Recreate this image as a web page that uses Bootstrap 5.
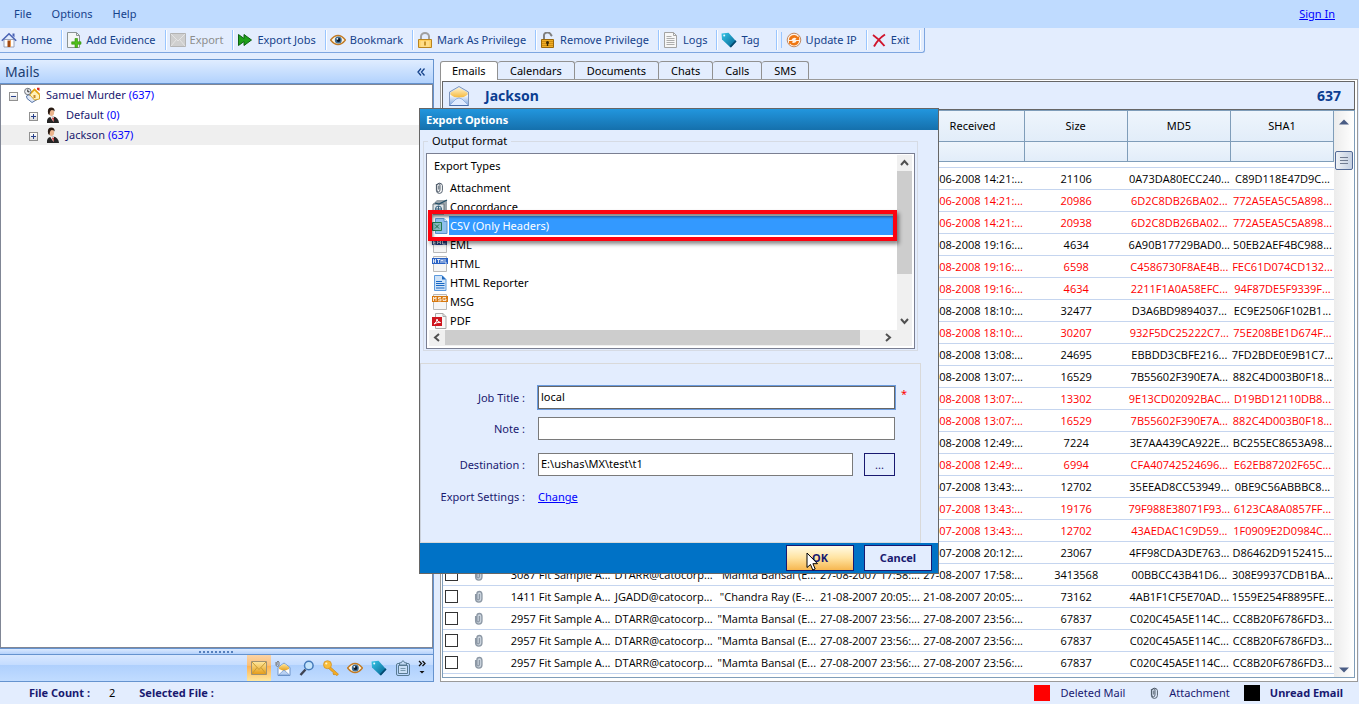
<!DOCTYPE html>
<html lang="en">
<head>
<meta charset="utf-8">
<meta name="viewport" content="width=device-width, initial-scale=1">
<title>Mails - Export Options</title>
<link href="https://cdn.jsdelivr.net/npm/bootstrap@5.3.0/dist/css/bootstrap.min.css" rel="stylesheet">
<style>
:root{--panel:#e3edfe;--navy:#15428b;--ink:#191970;--edge:#6593cf;--grid:#7f9db9}
body{font:11px/16px "Noto Sans","Open Sans",sans-serif;background:var(--panel);color:#000;min-width:1100px}
button{font:inherit;color:inherit;background:none;border:0;padding:0;text-align:left}
svg{display:block;flex:none}
.ico{width:16px;height:16px}
a,a:hover{color:#00f;text-decoration:underline}
.min0{min-height:0;min-width:0}

.menubar{height:28px;background:#bfdbff;color:var(--navy);padding:0 24px 0 14px}
.menubar button{margin-right:20px}
.tools{height:25px;color:var(--navy);border-bottom:1px solid #7ea6e0;border-right:1px solid #7ea6e0;border-radius:0 0 3px 0;padding-left:1px}
.tools button{display:flex;align-items:center;gap:4px;height:20px;padding:0 9px 0 4px;border-right:1px solid #9ac6ff;box-shadow:1px 0 #fff;white-space:nowrap}
.tools button:disabled{color:#8d8d8d}
.tools i{width:5px;height:16px;border-right:1px solid #9ac6ff}

.main{padding-top:6px;gap:6px}
.side{width:434px;border:1px solid var(--edge);border-left:0}
.sidehead{height:24px;background:linear-gradient(#e0edff,#b2d2fd);font-size:14px;color:#1d3f72;padding:0 8px 0 5px;border-bottom:1px solid var(--edge)}
.tree{background:#fff;border:1px solid #808695;color:var(--ink)}
.tree li{display:flex;align-items:center;height:20px;gap:6px}
.tree .lv0{padding-left:8px}
.tree .lv1{padding-left:28px}
.tree b{font-weight:400;color:#00f}
.tree .on{background:#efefef}
.twist{width:9px;height:9px;border:1px solid #919191;background:linear-gradient(#fff,#ddd);position:relative;margin-top:3px}
.twist::before,.twist.plus::after{content:"";position:absolute;left:1px;top:3px;width:5px;height:1px;background:#27408b}
.twist.plus::after{left:3px;top:1px;width:1px;height:5px}
.grip{height:7px;background:linear-gradient(#dbe9ff,#b5d2fb);border-top:1px solid var(--edge);border-bottom:1px solid var(--edge)}
.grip span{width:35px;height:2px;background:repeating-linear-gradient(90deg,#5580bd 0 2px,transparent 2px 4px)}
.navicons{height:26px;background:linear-gradient(#d9e8ff 0,#c4dcff 38%,#afd0fd 40%,#c1dcff);padding-right:2px}
.navicons button{width:24px;height:26px;display:flex;align-items:center;justify-content:center}
.navicons .on{background:linear-gradient(#fbd3a5 0,#fcc077 40%,#ffb14f 42%,#fee8a0)}
.navicons .more{width:16px}

.work{padding-right:1px}
.tabsrow{height:20px;padding-top:2px;position:relative;z-index:1}
.tabsrow button{height:18px;border:1px solid #919191;border-left-width:0;border-bottom:0;border-radius:3px 3px 0 0;padding:0 12px}
.tabsrow .on{background:#fff;height:19px;border-left-width:1px;width:58px;padding:0 11px}
.pane{border:1px solid #9a9a9a;background:#fff;padding:1px 2px 3px 1px}
.panehead{height:29px;border:1px solid #666;padding:0 13px 0 6px;color:#0b3d91;font-weight:700;font-size:14px;background:var(--panel)}
.gridbox{border:1px solid var(--grid);background:#fff}
.mails{table-layout:fixed;width:100%;border-collapse:separate;border-spacing:0;font:11px/21px "Open Sans","Noto Sans",sans-serif;text-align:center;white-space:nowrap}
.mails th{height:31px;font:inherit;font-family:"Noto Sans",sans-serif;border-right:1px solid var(--grid);border-bottom:1px solid var(--grid);padding:0 0 2px;background:linear-gradient(#eef5fc,#e2edf9)}
.mails tr.filter th{height:20px;padding:0}
.mails td{height:22px;padding:0;border-bottom:1px solid #c5d5ef;overflow:hidden}
.mails tr.space td{height:6px}
.mails .del{color:#f00}
.mails input{appearance:none;width:13px;height:13px;border:1px solid #333;background:#fff;margin:0 0 0 2px;display:block}
.c1{width:18px}.c2{width:36px}.c3{width:12px}
.vbar{width:20px;background:linear-gradient(90deg,#ececec,#fff)}
.vbar .thumb{width:18px;height:19px;border:1px solid #536a96;border-radius:2px;background:linear-gradient(90deg,#eef1f5,#c3cfe2);margin-top:26px;padding:5px 4px}
.vbar .thumb span{display:block;height:7px;background:repeating-linear-gradient(#707b90 0 1px,transparent 1px 3px)}

.foot{height:22px;color:var(--ink);padding:0 16px 0 29px}
.foot .count{margin:0 24px 0 19px}
.foot .sw{width:16px;height:16px;margin-right:10px}
.foot .legend-clip{gap:6px;margin:0 14px 0 22px}

.dlg{position:absolute;top:108px;left:0;right:1px;width:520px;margin:0 auto;z-index:5;border:1px solid #666;background:var(--panel)}
.dlgtitle{height:21px;background:linear-gradient(#2296de,#1570ac);color:#fff;font-weight:700;padding:3px 6px}
.dlg fieldset{border:1px solid #d6dbe4;margin:11px 20px 12px 3px;padding:11px 2px 1px;position:relative}
.dlg legend{position:absolute;left:4px;top:-9px;width:auto;float:none;font-size:11px;line-height:16px;padding:0 4px;margin:0;background:var(--panel)}
.types{border:1px solid #7a7f92;background:#fff;padding:1px 2px 2px}
.types h6{font:inherit;height:23px;padding:3px 5px 0;margin:0}
.types .rowitem{display:flex;align-items:center;gap:1px;height:19px;width:100%;padding-left:3px;position:relative}
.types .rowitem span{flex:1;line-height:19px;padding-left:1px}
.types .on span{background:#39f;color:#fff}
.types .on::after{content:"";position:absolute;left:-1px;right:0;top:-6px;bottom:-6px;border:4px solid #fd0310;box-shadow:2px 3px 4px #0007,inset 1px 3px 3px #0007;z-index:2}
.sbv{width:15px;background:#f0f0f0}
.sbv span{display:block;height:103px;background:#cdcdcd}
.sbh{height:16px;background:#f0f0f0;padding-bottom:1px}
.sbh span{flex:1;height:15px;background:#cdcdcd}
.form{border:1px solid #d9d9d9;border-left-color:#ccd2dc;margin-right:17px;padding:22px 12px 0 0;height:180px;color:var(--ink)}
.frow{display:grid;grid-template-columns:104px 1fr;column-gap:13px;align-items:center;margin-bottom:8px}
.frow.wide{margin-bottom:13px}
.frow label,.frow .lab{text-align:right}
.form input{width:357px;height:23px;border:1px solid #7a7a7a;border-radius:0;padding:0 2px 2px;font-size:11px;line-height:16px;color:#000;background:#fff}
.form input.focus{border-color:#666;box-shadow:0 0 0 1px #6a9bdf}
.form input.short{width:315px}
.req{color:#f00;margin-left:6px}
.dots{width:31px;height:23px;border:1px solid var(--ink);text-align:center;margin-left:11px}
.act{height:30px;background:#0072c6;padding:2px 6px 0;gap:10px}
.act button{width:68px;height:26px;border:1px solid var(--ink);color:var(--ink);background:var(--panel);font-weight:700;text-align:center}
.act .ok{background:linear-gradient(#fffbe6,#ffe3a0 50%,#f6b750);position:relative}
.act svg{position:absolute;left:19px;top:6px}
</style>
</head>
<body class="vh-100 d-flex flex-column overflow-hidden position-relative">

<svg width="0" height="0" class="position-absolute" aria-hidden="true">
 <defs>
  <linearGradient id="gGold" x2="0" y2="1"><stop stop-color="#ffe9a0"/><stop offset="1" stop-color="#e59a14"/></linearGradient>
  <linearGradient id="gTeal" x2="1" y2="1"><stop stop-color="#35c6e8"/><stop offset="1" stop-color="#04608f"/></linearGradient>
  <linearGradient id="gBlue" x2="0" y2="1"><stop stop-color="#fff"/><stop offset="1" stop-color="#7fa6e0"/></linearGradient>
  <linearGradient id="gOpen" x2="0" y2="1"><stop stop-color="#fff3cf"/><stop offset="1" stop-color="#f5b93c"/></linearGradient>
 </defs>
 <symbol id="home" viewBox="0 0 16 16"><path d="M3 7.500h10v7.500H3z" fill="#fff" stroke="#9aa2b8"/><path d="M.8 8.800 8 1.800l7.200 7" fill="none" stroke="#4a63b5" stroke-width="1.600"/><path d="M11.500 1.500h2v4l-2-2z" fill="#4a63b5"/><path d="M6.500 8.500h3.500V15H6.500z" fill="#a34a12"/><path d="M9 8.500h1V15H9z" fill="#e69a54"/></symbol>
 <symbol id="adddoc" viewBox="0 0 16 16"><path d="M1.500.5h9l3 3v12h-12z" fill="#f4f6f6" stroke="#8c9494"/><path d="M10.500.5v3h3" fill="none" stroke="#8c9494"/><path d="M9 6.500h2.500v3.300H15v2.400h-3.500v3.300H9v-3.300H5.700V9.800H9z" fill="#4fc01b" stroke="#2f8a0a" stroke-width=".6"/></symbol>
 <symbol id="envgray" viewBox="0 0 16 16"><path d="M.5 1.500h15v13H.5z" fill="#cfcfcf" stroke="#b4b4b4"/><path d="m1 2 7 7 7-7M1 14l5-6M15 14l-5-6" fill="none" stroke="#e4e4e4"/></symbol>
 <symbol id="jobs" viewBox="0 0 16 16"><path d="M1.500 2.500 7 6.500v-4L14.500 8 7 13.500v-4l-5.500 4z" fill="#1ea01a" stroke="#0c6212"/></symbol>
 <symbol id="eye" viewBox="0 0 16 16"><path d="M.6 8Q4 3.500 8 3.500T15.400 8Q12 12.500 8 12.500T.6 8z" fill="#fff6e4" stroke="#c07a24" stroke-width="1.300"/><circle cx="8.300" cy="8" r="3.500" fill="#3f6e96"/><circle cx="8.500" cy="8" r="1.900" fill="#0b1a2a"/><circle cx="7.400" cy="6.800" r=".9" fill="#fff"/></symbol>
 <symbol id="lock" viewBox="0 0 16 16"><path d="M4 8V4.500a4 3.500 0 0 1 8 0V8" fill="none" stroke="#a0a0a0" stroke-width="2"/><path d="M1.500 7.500h13v8h-13z" fill="#ffd060" stroke="#b88420"/><path d="M3.500 10h9M3.500 12h9M3.500 14h9" stroke="#fff3c4" stroke-width=".8"/><path d="M7 9.500h2v4H7z" fill="#c8962b"/></symbol>
 <symbol id="unlock" viewBox="0 0 16 16"><path d="M4 8V4a3.500 3 0 0 1 7-1l1 1" fill="none" stroke="#808080" stroke-width="2"/><path d="M1.500 7.500h12v8h-12z" fill="#efae28" stroke="#9b680b"/><path d="M2 9.500h11M2 11.500h11M2 13.500h11" stroke="#c9860f" stroke-width=".8"/><circle cx="7.500" cy="10.500" r="1.500" fill="#3c2a04"/><path d="M6.800 11h1.400v3H6.800z" fill="#3c2a04"/></symbol>
 <symbol id="log" viewBox="0 0 16 16"><path d="M1.500.5h9l3 3v12h-12z" fill="#f7f7f7" stroke="#a3a3a3"/><path d="M10.500.5v3h3" fill="none" stroke="#a3a3a3"/><path d="M3.500 4.500h5M3.500 6.500h8M3.500 8.500h8M3.500 10.500h8M3.500 12.500h8" stroke="#adadad"/></symbol>
 <symbol id="tag" viewBox="0 0 16 16"><path d="M.5 1.500 7.500.8 15.300 9.600 9.500 15.500 1 7.500z" fill="url(#gTeal)"/><path d="m10 15.500 5.500-6-1-1.200-5.800 6z" fill="#044a70"/><circle cx="3.200" cy="3.400" r="1" fill="#e8fbff"/></symbol>
 <symbol id="upd" viewBox="0 0 16 16"><circle cx="8" cy="8" r="6.800" fill="#fff1e4" stroke="#c08a64"/><path d="M3 8a5 5 0 0 1 9-3l1.200-1v4H9l1.500-1.300A3 3 0 0 0 5.500 8z" fill="#ef7612"/><path d="M13 9a5 5 0 0 1-9 2.500L3 12.500V9h4l-1.200 1.200A3 3 0 0 0 10.500 9z" fill="#ef7612"/></symbol>
 <symbol id="exit" viewBox="0 0 16 16"><path d="M2 3q6 4 11.500 11M14 2.500Q7 7 3 14.500" fill="none" stroke="#d0142c" stroke-width="1.900"/></symbol>
 <symbol id="case" viewBox="0 0 16 16"><path d="m2.500 9 .5 2.500 5 4 6-3.500V8H4z" fill="#dfe8f7" stroke="#5674a5"/><path d="m5.500 7.500 5-5 5 5V12l-5 1z" fill="#fff1b8" stroke="#d6a526"/><path d="m5 7.800 5.500-5.300 5 5" fill="none" stroke="#e5a40c" stroke-width="1.700"/><path d="M13 .8h2.500V4L13 2.500z" fill="#d9241b"/><path d="M9.500 8h2v3h-2z" fill="#c98a2a"/><circle cx="3.800" cy="4.500" r="3.200" fill="#eceef2" stroke="#6d727a"/><path d="M3.800 2.500v2.300h1.700" fill="none" stroke="#222"/></symbol>
 <symbol id="person" viewBox="0 0 16 16"><path d="M3 16q-.5-5 3-6l3.500-.5q5 1 5.500 6.500z" fill="#262626"/><path d="M6 9.500 9.500 15l.5-5.500z" fill="#f1f1f1"/><path d="m8 10.500 1.300 4.500.7-4z" fill="#d12626"/><ellipse cx="7.500" cy="5.500" rx="2.600" ry="3.400" fill="#eab48d"/><path d="M4.200 7Q2.800.8 7 .6q4 .2 3.600 3.900-1-1.400-3-1.400-1.300.3-1.600 2Q5.500 7 5.500 8z" fill="#2b1c14"/></symbol>
 <symbol id="clip" viewBox="-1 -2 20 20"><path d="M5 4.500v5.800a2 2.500 0 0 0 4 0V4.200a1.500 1.700 0 0 0-3 0M5 4.500Q5.500 2 8.500 2T12 5v6A3.700 3.700 0 0 1 4.500 11V3M7.500 5v5" fill="none" stroke="#4b5866" stroke-width="1.200"/></symbol>
 <symbol id="clip2" viewBox="-1 -1 19 19"><path d="M4.500 5v6a3.700 3.500 0 0 0 7.500 0V5.500Q12 2 9 2T6 5v5.500q1.500 3 3 0V5" fill="#cdd6df" stroke="#8d98a5" stroke-width="1.600"/></symbol>
 <symbol id="openmail" viewBox="0 0 20 20"><path d="M.5 6 10 .5 19.500 6V19.500H.5z" fill="#cfe0f8" stroke="#7f96bd"/><path d="M1.500 6.500 10 1.500l8.500 5v5h-17z" fill="url(#gOpen)"/><path d="M1 8.500q9 7 18 0V19H1z" fill="url(#gBlue)"/><path d="m1 19 6-6q3-2 6 0l6 6" fill="#dfeaff" stroke="#93b3e2"/><path d="M.5 19.500h19" stroke="#4b6fae"/></symbol>
 <symbol id="envgold" viewBox="0 0 16 16"><path d="M.5 1.500h15v13H.5z" fill="url(#gGold)" stroke="#9e9174"/><path d="m1 2 7 7.500L15 2M1 14l5-6.500M15 14l-5-6.500" fill="none" stroke="#c99b34"/></symbol>
 <symbol id="mailclip" viewBox="0 0 16 16"><path d="M3 7.500 9 3l6 4.500v8H3z" fill="#fff" stroke="#6c92c8"/><path d="m4 7 5-3.500 5 3.500v2L9 11 4 9z" fill="url(#gGold)"/><path d="m3.500 15 5.500-5 5.500 5z" fill="#b9d1f3" stroke="#6c92c8" stroke-width=".7"/><path d="M1 2v3.500q1.500 2 3 0V2q-1-1.500-2 0v3" fill="none" stroke="#777"/></symbol>
 <symbol id="find" viewBox="0 0 16 16"><path d="m1.500 15 5-5.500" stroke="#3d4252" stroke-width="2.400"/><circle cx="9.800" cy="5.500" r="4.300" fill="#c5e4fb" stroke="#4479b8" stroke-width="1.500"/></symbol>
 <symbol id="key" viewBox="0 0 16 16"><path d="m7 6.500 8.500 7.700-1.700 1.500-1.800-1.500-1 .8-1-1 .4-1.300L5 8z" fill="#f4ac22" stroke="#c47f14" stroke-width=".6"/><circle cx="4.500" cy="4.700" r="4" fill="#f9bd3b" stroke="#cf8a1c" stroke-width=".7"/><circle cx="3.300" cy="3.500" r="1.100" fill="#fff4cf"/></symbol>
 <symbol id="board" viewBox="0 0 16 16"><rect x="1.500" y="3.500" width="13" height="12" rx="1.500" fill="none" stroke="#587b92"/><path d="M3.500 5.500h9v8h-9z" fill="#c9dff6" stroke="#587b92"/><path d="M4.500 5V2.800H6.200q1.800-4 3.600 0h1.700V5z" fill="#c4dbf5" stroke="#587b92"/><path d="M5.500 8.500h5M5.500 10.500h5" stroke="#7899ae"/></symbol>
 <symbol id="chev" viewBox="0 0 10 16"><path d="m1 1 2.500 2.500L1 6M4.500 1 7 3.500 4.500 6" fill="none" stroke="#111" stroke-width="1.300"/><path d="M1.500 11h5L4 13.500z" fill="#111"/></symbol>
 <symbol id="conc" viewBox="0 0 16 16"><path d="m1 5 4-4h10v10l-3 4H1z" fill="#9aa4ab"/><path d="M1 5h11v10H1z" fill="#dfe5e8" stroke="#69757d"/><circle cx="6.500" cy="10" r="3" fill="none" stroke="#36617f"/><path d="M3.500 10h6M6.500 7v6" stroke="#36617f"/><path d="m3 4 4 1 8-4" fill="none" stroke="#1f4c66" stroke-width="1.200"/></symbol>
 <symbol id="csv" viewBox="0 0 16 16"><path d="M3.500.5H12l3 3v12H3.500z" fill="#8fc0ee" stroke="#5a92cb"/><path d="M12 .5v3h3" fill="#dcecfb" stroke="#5a92cb"/><path d="M.5 4.500h9v8h-9z" fill="#86b9c0" stroke="#20794f"/><path d="m3 6.500 4 4m0-4-4 4" stroke="#1d6d48"/></symbol>
 <symbol id="eml" viewBox="0 0 16 16"><path d="M1.500.5h13v15h-13z" fill="#f5f5f5" stroke="#b9b9b9"/><path d="M0 3h15v5H0z" fill="#27417d"/><path d="M1.500 4v3m0-3h2m-2 1.500h2m-2 1.500h2M5.500 7V4L7 6l1.500-2v3m2-3v3h3" fill="none" stroke="#fff" stroke-width=".8"/></symbol>
 <symbol id="html" viewBox="0 0 16 16"><path d="M1.500.5h13v15h-13z" fill="#f5f5f5" stroke="#b9b9b9"/><path d="M0 2h16v6H0z" fill="#2a62c4"/><path d="M1.500 3v4m0-2h2m0-2v4M5 3.500h3M6.500 3.500V7m2.500 0V3.500L10 5l1-1.500V7m2-4v4h2" fill="none" stroke="#fff" stroke-width=".8"/></symbol>
 <symbol id="rep" viewBox="0 0 16 16"><path d="M2.500.5H10l4 4v11H2.500z" fill="#cfe3f8" stroke="#5d9add"/><path d="M10 .5v4h4z" fill="#1f68bd"/><path d="M4 6.500h6M4 8.500h8.500M4 10.500h8.500M4 13h8.500" stroke="#1767c4" stroke-width="1.200"/></symbol>
 <symbol id="msg" viewBox="0 0 16 16"><path d="M1.500.5h13v15h-13z" fill="#f5f5f5" stroke="#b9b9b9"/><path d="M0 2h16v6H0z" fill="#d8790f"/><path d="M1.500 7V3L3 5l1-2v4M9 3.500H6.500V5H9v1.800H6M14 3.500h-3v3h3V5h-1.500" fill="none" stroke="#fff" stroke-width=".8"/></symbol>
 <symbol id="pdf" viewBox="0 0 16 16"><path d="M3.500.5H11l3 3v12H3.500z" fill="#f8f8f8" stroke="#a9a9a9"/><path d="M11 .5v3h3" fill="none" stroke="#a9a9a9"/><path d="M0 4h10v9H0z" fill="#cf1720"/><path d="M2 11q3-2 3-5 0 3 3.500 3.500Q5 9 2 11z" fill="none" stroke="#fff"/></symbol>
</svg>

<nav class="menubar d-flex align-items-center flex-shrink-0" aria-label="Menu">
 <button>File</button><button>Options</button><button>Help</button>
 <a class="ms-auto" href="#">Sign In</a>
</nav>

<div class="d-flex flex-shrink-0"><div class="tools d-flex align-items-center" role="toolbar">
 <button class="ps-0"><svg class="ico"><use href="#home"/></svg>Home</button>
 <button><svg class="ico"><use href="#adddoc"/></svg>Add Evidence</button>
 <button disabled><svg class="ico"><use href="#envgray"/></svg>Export</button>
 <button><svg class="ico"><use href="#jobs"/></svg>Export Jobs</button>
 <button><svg class="ico"><use href="#eye"/></svg>Bookmark</button>
 <button><svg class="ico"><use href="#lock"/></svg>Mark As Privilege</button>
 <button><svg class="ico"><use href="#unlock"/></svg>Remove Privilege</button>
 <button><svg class="ico"><use href="#log"/></svg>Logs</button>
 <button class="pe-3"><svg class="ico"><use href="#tag"/></svg>Tag</button>
 <i></i>
 <button><svg class="ico"><use href="#upd"/></svg>Update IP</button>
 <button class="me-1"><svg class="ico"><use href="#exit"/></svg>Exit</button>
</div></div>

<main class="main d-flex flex-fill min0">
 <section class="side d-flex flex-column flex-shrink-0">
  <div class="sidehead d-flex align-items-center justify-content-between">Mails<svg width="8" height="8" viewBox="0 0 8 8"><path d="M4 .5 1 4l3 3.500M7.500.5l-3 3.500 3 3.500" fill="none" stroke="#15428b" stroke-width="1.300"/></svg></div>
  <ul class="tree list-unstyled flex-fill mb-0">
   <li class="lv0"><button class="twist" aria-label="Collapse"></button><svg class="ico"><use href="#case"/></svg><span>Samuel Murder <b>(637)</b></span></li>
   <li class="lv1"><button class="twist plus" aria-label="Expand"></button><svg class="ico"><use href="#person"/></svg><span>Default <b>(0)</b></span></li>
   <li class="lv1 on"><button class="twist plus" aria-label="Expand"></button><svg class="ico"><use href="#person"/></svg><span>Jackson <b>(637)</b></span></li>
  </ul>
  <div class="grip d-flex align-items-center justify-content-center"><span></span></div>
  <div class="navicons d-flex justify-content-end">
   <button class="on" aria-label="Mail"><svg class="ico"><use href="#envgold"/></svg></button>
   <button aria-label="Attachments"><svg class="ico"><use href="#mailclip"/></svg></button>
   <button aria-label="Search"><svg class="ico"><use href="#find"/></svg></button>
   <button aria-label="Keywords"><svg class="ico"><use href="#key"/></svg></button>
   <button aria-label="Bookmarks"><svg class="ico"><use href="#eye"/></svg></button>
   <button aria-label="Tags"><svg class="ico"><use href="#tag"/></svg></button>
   <button aria-label="Clipboard"><svg class="ico"><use href="#board"/></svg></button>
   <button class="more" aria-label="More"><svg width="10" height="16"><use href="#chev"/></svg></button>
  </div>
 </section>

 <section class="work d-flex flex-column flex-fill min0">
  <div class="tabsrow d-flex align-items-start flex-shrink-0">
   <button class="on">Emails</button><button>Calendars</button><button>Documents</button><button>Chats</button><button>Calls</button><button>SMS</button>
  </div>
  <div class="pane flex-fill d-flex flex-column min0">
   <div class="panehead d-flex align-items-center flex-shrink-0"><svg width="20" height="20" class="me-3"><use href="#openmail"/></svg>Jackson<span class="ms-auto">637</span></div>
   <div class="gridbox d-flex flex-fill min0">
    <div class="flex-fill overflow-hidden min0">
     <table class="mails">
      <colgroup><col class="c1"><col class="c2"><col class="c3"><col><col><col><col><col><col><col><col></colgroup>
      <thead>
       <tr><th></th><th></th><th></th><th></th><th></th><th></th><th></th><th>Received</th><th>Size</th><th>MD5</th><th>SHA1</th></tr>
       <tr class="filter"><th></th><th></th><th></th><th></th><th></th><th></th><th></th><th></th><th></th><th></th><th></th></tr>
      </thead>
      <tbody id="rows"><tr class="space"><td colspan="11"></td></tr></tbody>
     </table>
    </div>
    <div class="vbar d-flex flex-column align-items-center flex-shrink-0">
     <svg width="10" height="6" class="mt-2"><path d="M0 5.500h10L5 .5z" fill="#4a5d85"/></svg>
     <div class="thumb"><span></span></div>
     <svg width="10" height="6" class="mt-auto mb-1"><path d="M0 .5h10l-5 5z" fill="#4a5d85"/></svg>
    </div>
   </div>
  </div>
 </section>
</main>

<footer class="foot d-flex align-items-center flex-shrink-0">
 <b>File Count :</b><span class="count text-black">2</span><b>Selected File :</b>
 <span class="sw ms-auto" style="background:#f00"></span>Deleted Mail
 <span class="legend-clip d-flex align-items-center"><svg class="ico"><use href="#clip"/></svg>Attachment</span>
 <span class="sw bg-black"></span><b>Unread Email</b>
</footer>

<div class="dlg" role="dialog" aria-labelledby="dt">
 <div class="dlgtitle" id="dt">Export Options</div>
 <fieldset>
  <legend>Output format</legend>
  <div class="types">
   <div class="d-flex">
    <div class="flex-fill">
     <h6>Export Types</h6>
     <button class="rowitem"><svg class="ico"><use href="#clip"/></svg><span>Attachment</span></button>
     <button class="rowitem"><svg class="ico"><use href="#conc"/></svg><span>Concordance</span></button>
     <button class="rowitem on"><svg class="ico"><use href="#csv"/></svg><span>CSV (Only Headers)</span></button>
     <button class="rowitem"><svg class="ico"><use href="#eml"/></svg><span>EML</span></button>
     <button class="rowitem"><svg class="ico"><use href="#html"/></svg><span>HTML</span></button>
     <button class="rowitem"><svg class="ico"><use href="#rep"/></svg><span>HTML Reporter</span></button>
     <button class="rowitem"><svg class="ico"><use href="#msg"/></svg><span>MSG</span></button>
     <button class="rowitem"><svg class="ico"><use href="#pdf"/></svg><span>PDF</span></button>
    </div>
    <div class="sbv d-flex flex-column align-items-center">
     <svg width="9" height="16" viewBox="0 0 9 16"><path d="m1 10 3.500-4L8 10" fill="none" stroke="#505050" stroke-width="2"/></svg>
     <span class="w-100"></span>
     <svg class="mt-auto" width="9" height="17" viewBox="0 0 9 17"><path d="m1 6 3.500 4L8 6" fill="none" stroke="#505050" stroke-width="2"/></svg>
    </div>
   </div>
   <div class="sbh d-flex align-items-center">
    <svg width="16" height="9" viewBox="0 0 16 9"><path d="M10 1 6 4.500 10 8" fill="none" stroke="#505050" stroke-width="2"/></svg>
    <span></span>
    <svg class="ms-3 me-1" width="32" height="9" viewBox="0 0 32 9"><path d="m10 1 4 3.500L10 8" fill="none" stroke="#505050" stroke-width="2"/></svg>
   </div>
  </div>
 </fieldset>
 <form class="form" onsubmit="return false">
  <div class="frow"><label for="jt">Job Title :</label><div class="d-flex"><input id="jt" class="focus" value="local"><span class="req">*</span></div></div>
  <div class="frow wide"><label for="nt">Note :</label><input id="nt"></div>
  <div class="frow wide"><label for="ds">Destination :</label><div class="d-flex"><input id="ds" class="short" value="E:\ushas\MX\test\t1"><button class="dots" aria-label="Browse">...</button></div></div>
  <div class="frow"><span class="lab">Export Settings :</span><a href="#">Change</a></div>
 </form>
 <div class="act d-flex justify-content-end">
  <button class="ok">OK<svg width="13" height="19" viewBox="0 0 13 19"><path d="M1 1v14.500l3.500-3 2.300 5.500 2.400-1-2.300-5.300H11.500z" fill="#fff" stroke="#000"/></svg></button>
  <button>Cancel</button>
 </div>
</div>

<script>
// Mail list. First value 1 = deleted mail; then received, size, MD5, SHA1, subject, from, to, sent
const mails = [
 [0,'23-06-2008 14:21:...','21106','0A73DA80ECC240...','C89D118E47D9C...'],
 [1,'23-06-2008 14:21:...','20986','6D2C8DB26BA02...','772A5EA5C5A898...'],
 [1,'23-06-2008 14:21:...','20938','6D2C8DB26BA02...','772A5EA5C5A898...'],
 [0,'20-08-2008 19:16:...','4634','6A90B17729BAD0...','50EB2AEF4BC988...'],
 [1,'20-08-2008 19:16:...','6598','C4586730F8AE4B...','FEC61D074CD132...'],
 [1,'20-08-2008 19:16:...','4634','2211F1A0A58EFC...','94F87DE5F9339F...'],
 [0,'20-08-2008 18:10:...','32477','D3A6BD9894037...','EC9E2506F102B1...'],
 [1,'20-08-2008 18:10:...','30207','932F5DC25222C7...','75E208BE1D674F...'],
 [0,'20-08-2008 13:08:...','24695','EBBDD3CBFE216...','7FD2BDE0E9B1C7...'],
 [0,'20-08-2008 13:07:...','16529','7B55602F390E7A...','882C4D003B0F18...'],
 [1,'20-08-2008 13:07:...','13302','9E13CD02092BAC...','D19BD12110DB8...'],
 [1,'20-08-2008 13:07:...','16529','7B55602F390E7A...','882C4D003B0F18...'],
 [0,'20-08-2008 12:49:...','7224','3E7AA439CA922E...','BC255EC8653A98...'],
 [1,'20-08-2008 12:49:...','6994','CFA40742524696...','E62EB87202F65C...'],
 [0,'20-07-2008 13:43:...','12702','35EEAD8CC53949...','0BE9C56ABBBC8...'],
 [1,'20-07-2008 13:43:...','19176','79F988E38071F93...','6123CA8A0857FF...'],
 [1,'20-07-2008 13:43:...','12702','43AEDAC1C9D59...','1F0909E2D0984C...'],
 [0,'20-07-2008 20:12:...','23067','4FF98CDA3DE763...','D86462D9152415...'],
 [0,'27-08-2007 17:58:...','3413568','00BBCC43B41D6...','308E9937CDB1BA...','3087 Fit Sample A...','DTARR@catocorp...','"Mamta Bansal (E...','27-08-2007 17:58:...'],
 [0,'21-08-2007 20:05:...','73162','4AB1F1CF5E70AD...','1559E254F8895FE...','1411 Fit Sample A...','JGADD@catocorp...','"Chandra Ray (E-...','21-08-2007 20:05:...'],
 ...Array(3).fill([0,'27-08-2007 23:56:...','67837','C020C45A5E114C...','CC8B20F6786FD3...','2957 Fit Sample A...','DTARR@catocorp...','"Mamta Bansal (E...','27-08-2007 23:56:...'])
];
document.getElementById('rows').insertAdjacentHTML('beforeend', mails.map(m => {
  const [del, recv, size, md5, sha, subj = '', from = '', to = '', sent = ''] = m;
  const tick = subj && '<input type="checkbox" aria-label="Select mail">';
  const clip = subj && '<svg class="ico mx-auto"><use href="#clip2"/></svg>';
  return `<tr class="${del ? 'del' : ''}"><td>${tick}</td><td>${clip}</td><td></td>` +
    [subj, from, to, sent, recv, size, md5, sha].map(t => `<td>${t}</td>`).join('') + '</tr>';
}).join(''));
</script>
<script src="https://cdn.jsdelivr.net/npm/bootstrap@5.3.0/dist/js/bootstrap.bundle.min.js"></script>
</body>
</html>
